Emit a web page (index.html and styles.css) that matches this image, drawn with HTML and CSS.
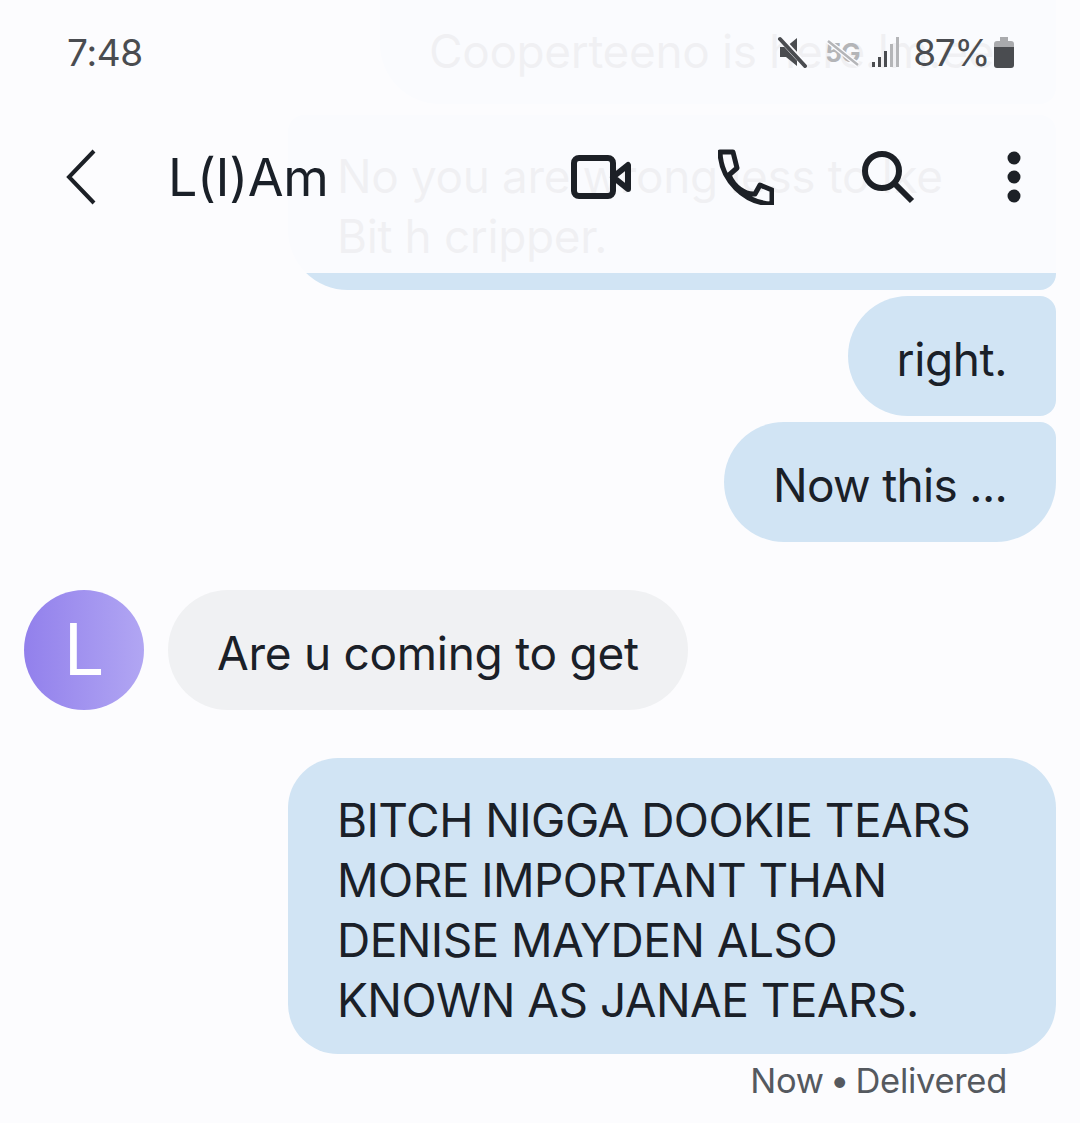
FILE: index.html
```html
<!DOCTYPE html>
<html lang="en">

<head>
  <meta charset="UTF-8" />
  <meta name="viewport" content="width=device-width, initial-scale=1.0" />
  <title>L(I)Am</title>
  <link rel="stylesheet" href="styles.css">
</head>

<body>
  <main class="thread">
    <div class="msg sent bubble-ghost">Cooperteeno is here.lm.ee</div>
    <div class="msg sent bubble-wide">No you are wrong less to lke<br>Bit h cripper.</div>
    <div class="msg sent bubble-mid">right.</div>
    <div class="msg sent bubble-last">Now this ...</div>

    <div class="incoming">
      <div class="avatar">L</div>
      <div class="msg received">Are u coming to get</div>
    </div>

    <div class="msg sent bubble-big">BITCH NIGGA DOOKIE TEARS<br>MORE IMPORTANT THAN<br>DENISE MAYDEN ALSO<br>KNOWN AS JANAE TEARS.</div>
    <div class="meta">Now • Delivered</div>
  </main>

  <header class="top">
    <div class="status">
      <span class="time">7:48</span>
      <div class="status-right">
        <svg class="ic-mute" width="32" height="32" viewBox="0 0 32 32">
          <path d="M3 11h6l11-9v28L9 21H3z" fill="#4a4c50" />
          <path d="M4 3l25 27" stroke="#fcfcff" stroke-width="6" />
          <path d="M3 3l25 27" stroke="#4a4c50" stroke-width="4" stroke-linecap="round" />
        </svg>
        <div class="fiveg">
          <span>5G</span>
          <svg class="fiveg-slash" width="36" height="30" viewBox="0 0 36 30">
            <path d="M3 3l30 24" stroke="#fcfcff" stroke-width="5" />
            <path d="M3 3l30 24" stroke="#b4b5b8" stroke-width="2.5" />
          </svg>
        </div>
        <svg class="ic-signal" width="28" height="32" viewBox="0 0 28 32">
          <rect x="0" y="26" width="3" height="5" fill="#4a4c50" />
          <rect x="6" y="21" width="3" height="10" fill="#4a4c50" />
          <rect x="12" y="15" width="3" height="16" fill="#4a4c50" />
          <rect x="18" y="8" width="3" height="23" fill="#b4b5b8" />
          <rect x="24" y="1" width="3" height="30" fill="#b4b5b8" />
        </svg>
        <span class="battery-text">87%</span>
        <svg class="ic-battery" width="20" height="32" viewBox="0 0 20 32">
          <path d="M6 1h8v4h3q3 0 3 3v4H0V8q0-3 3-3h3z" fill="#a9aaad" />
          <path d="M0 11h20v18q0 3-3 3H3q-3 0-3-3z" fill="#4a4c50" />
        </svg>
      </div>
    </div>

    <div class="toolbar">
      <svg class="ic-back" width="32" height="56" viewBox="0 0 32 56">
        <path d="M29 2L4 28l25 26" fill="none" stroke="#1c2026" stroke-width="4" />
      </svg>
      <h1 class="name">L(I)Am</h1>
      <div class="actions">
        <svg width="60" height="44" viewBox="0 0 60 44">
          <rect x="3" y="3" width="39" height="38" rx="5" fill="none" stroke="#1c2026" stroke-width="6" />
          <path d="M42 22l15-12v24z" fill="none" stroke="#1c2026" stroke-width="6" stroke-linejoin="round" />
        </svg>
        <svg width="56" height="56" viewBox="0 0 56 56">
          <path d="M2 3h13l4 16-8 7C16 38 27 46 37 45l5-9 12 5v14C26 54 3 31 2 3z" fill="none" stroke="#1c2026"
            stroke-width="5" stroke-linejoin="round" />
        </svg>
        <svg width="54" height="54" viewBox="0 0 54 54">
          <circle cx="21" cy="21" r="17" fill="none" stroke="#1c2026" stroke-width="6" />
          <path d="M33 33l18 18" stroke="#1c2026" stroke-width="6" />
        </svg>
        <svg class="ic-more" width="14" height="52" viewBox="0 0 14 52">
          <circle cx="7" cy="7" r="6.5" fill="#1c2026" />
          <circle cx="7" cy="26" r="6.5" fill="#1c2026" />
          <circle cx="7" cy="45" r="6.5" fill="#1c2026" />
        </svg>
      </div>
    </div>
  </header>
</body>

</html>
```

FILE: styles.css
```css
* {
  box-sizing: border-box;
}

html,
body {
  margin: 0;
  height: 1123px;
  overflow: hidden;
}

body {
  position: relative;
  font-family: Inter, 'Noto Sans', sans-serif;
  background-color: #fcfcfe;
  color: #1a2028;
}

.thread {
  display: flex;
  flex-direction: column;
  align-items: flex-end;
  padding-right: 24px;
}

.msg {
  font-size: 46px;
  line-height: 60px;
  padding: 33px 49px 0;
  background-color: #d1e4f4;
  border-radius: 60px;
  letter-spacing: -0.4px;
}

.bubble-ghost {
  width: 676px;
  height: 104px;
  padding-top: 21px;
  border-radius: 0 0 16px 60px;
}

.bubble-wide {
  width: 768px;
  height: 175px;
  margin-top: 11px;
  padding-top: 31px;
  border-radius: 16px 16px 16px 60px;
}

.bubble-mid {
  height: 120px;
  margin-top: 6px;
  border-radius: 60px 16px 16px 60px;
}

.bubble-last {
  height: 120px;
  margin-top: 6px;
  letter-spacing: -0.7px;
  border-radius: 60px 16px 60px 60px;
}

.incoming {
  display: flex;
  align-items: center;
  gap: 24px;
  align-self: flex-start;
  margin: 48px 0 0 24px;
}

.avatar {
  width: 120px;
  height: 120px;
  border-radius: 50%;
  background: linear-gradient(90deg, #9280ec, #b1a6f3);
  color: #fff;
  font-size: 72px;
  font-weight: 400;
  line-height: 118px;
  text-align: center;
}

.received {
  height: 120px;
  letter-spacing: -0.28px;
  background-color: #f0f1f3;
}

.bubble-big {
  width: 768px;
  height: 296px;
  margin-top: 48px;
  padding-top: 32px;
  letter-spacing: -0.55px;
  border-radius: 50px;
}

.meta {
  margin: 5px 49px 0 0;
  font-size: 34.5px;
  line-height: 44px;
  letter-spacing: -0.3px;
  word-spacing: -3px;
  color: #55595f;
}

/* translucent bar lying over the scrolled messages */
.top {
  position: absolute;
  top: 0;
  left: 0;
  width: 100%;
  height: 273px;
  background-color: rgba(252, 252, 254, 0.95);
}

.status {
  display: flex;
  align-items: center;
  justify-content: space-between;
  height: 104px;
  padding: 0 66px 0 67px;
  color: #4a4c50;
}

.time {
  font-size: 37px;
  letter-spacing: -0.3px;
}

.status-right {
  display: flex;
  align-items: center;
}

.fiveg {
  position: relative;
  width: 36px;
  margin: 0 11px 0 16px;
  font-size: 26px;
  font-weight: 700;
  letter-spacing: -1px;
  color: #b4b5b8;
}

.fiveg-slash {
  position: absolute;
  top: 1px;
  left: 0;
}

.battery-text {
  margin: 0 5px 0 13px;
  font-size: 37px;
  letter-spacing: -1.5px;
}

.toolbar {
  display: flex;
  align-items: center;
  height: 146px;
  padding: 0 59px 0 65px;
}

.name {
  margin: 0 0 0 71px;
  font-size: 52px;
  font-weight: 400;
  letter-spacing: -0.4px;
}

.actions {
  display: flex;
  align-items: center;
  gap: 87px;
  margin-left: auto;
}

.ic-more {
  margin-left: 5px;
}
```
